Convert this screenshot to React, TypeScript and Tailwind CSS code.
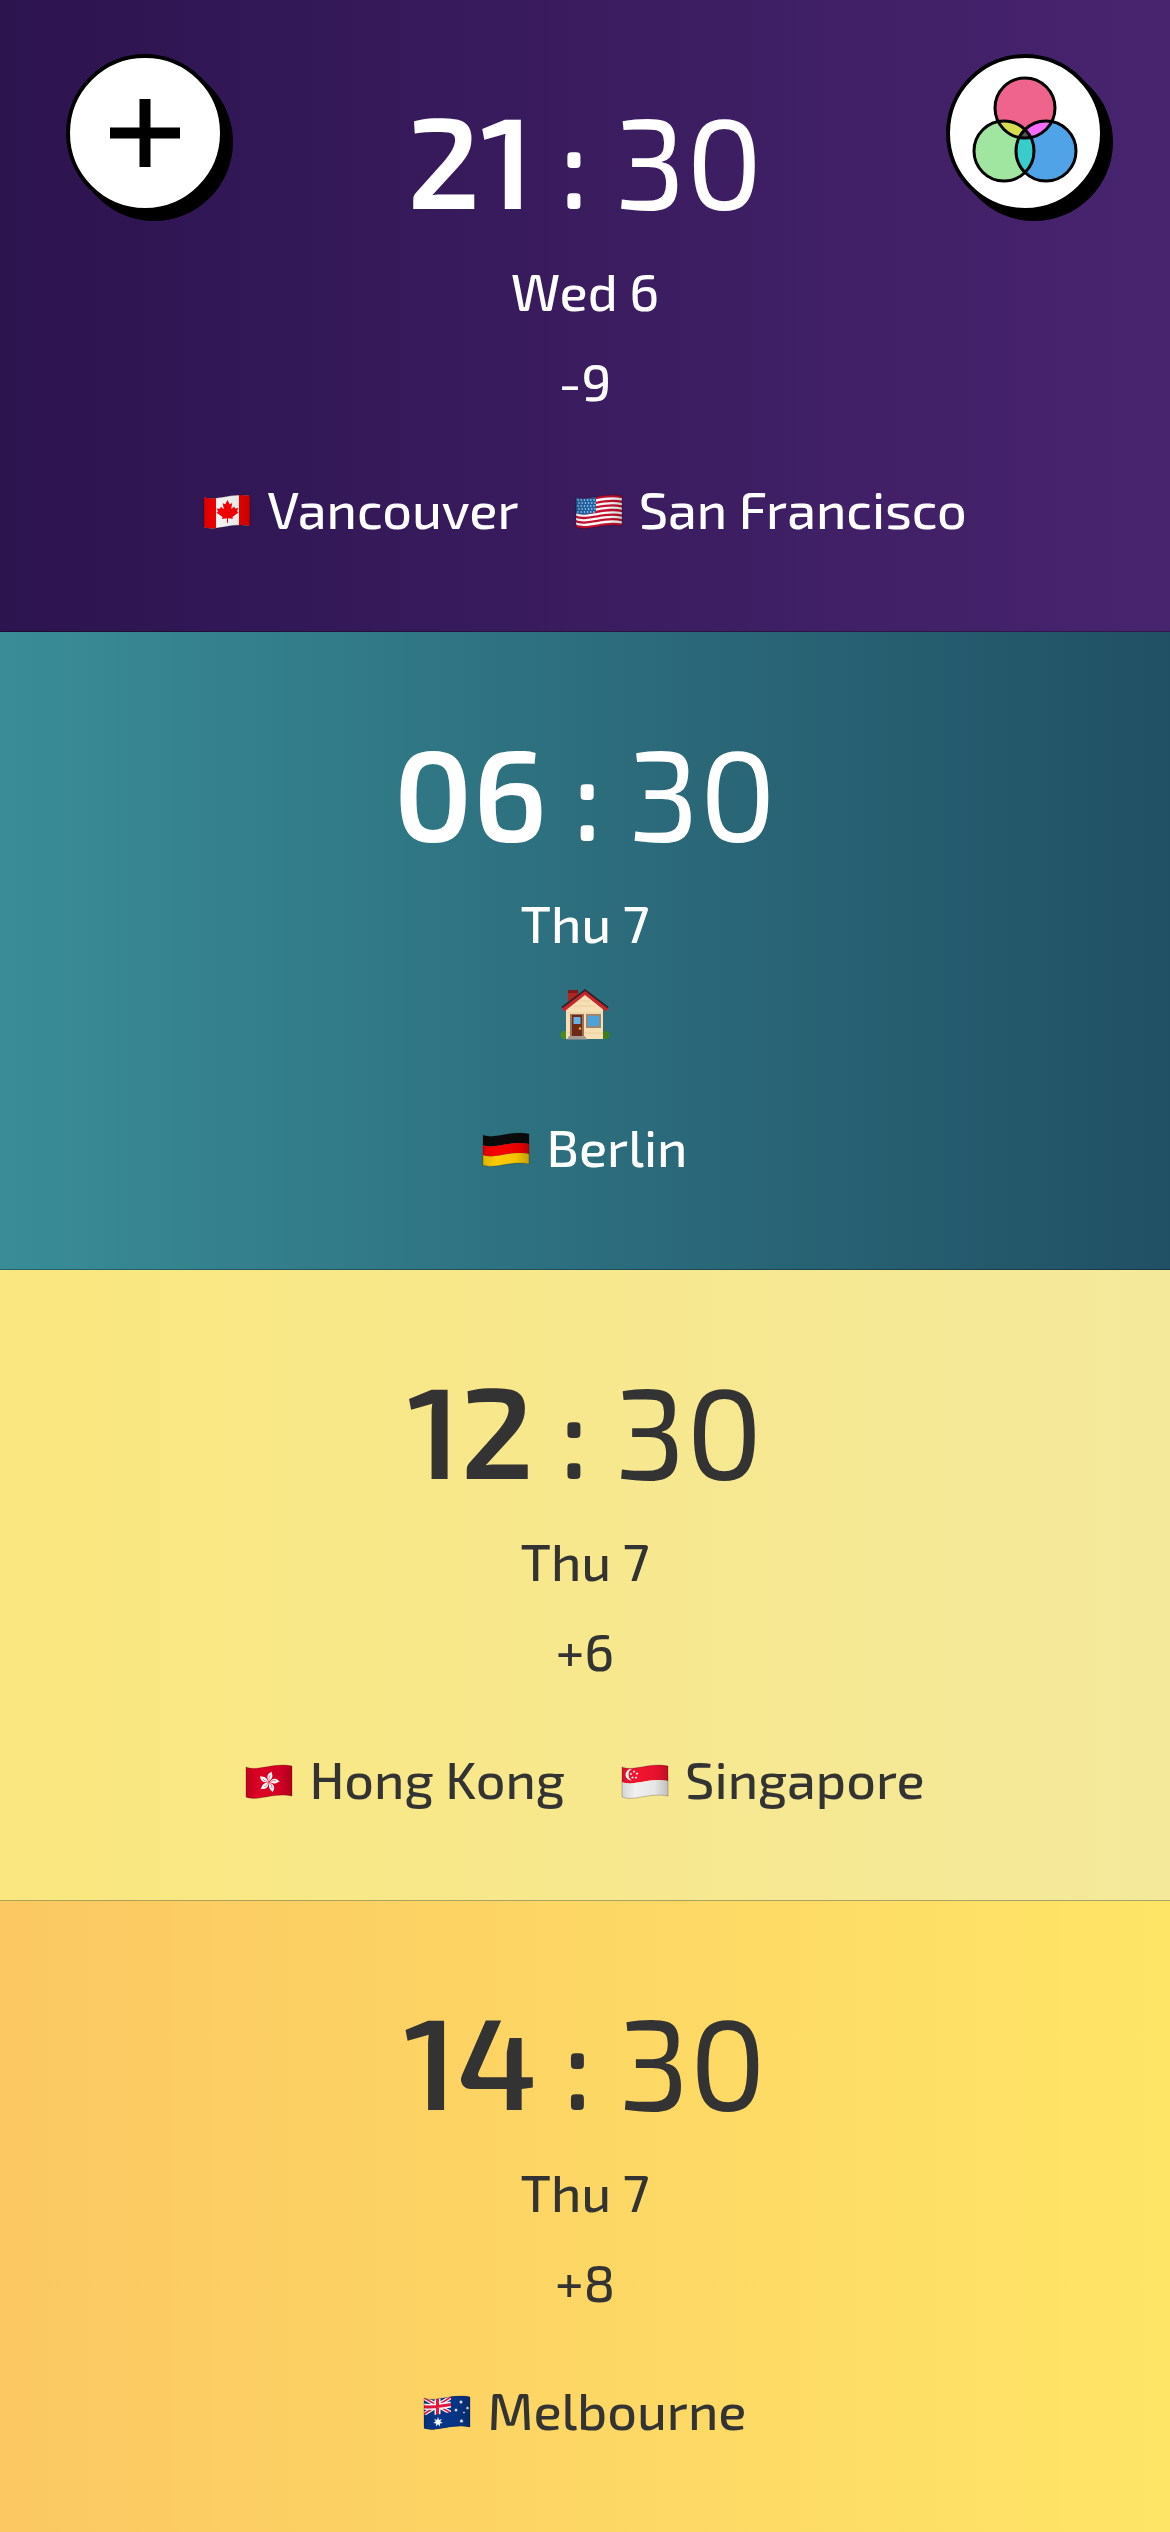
import React from "react";

type Flag = "ca" | "us" | "de" | "hk" | "sg" | "au";

const WAVE = "M1 4 C12 9 29 -1 47 3 V33 C29 29 12 39 1 34 Z";

function Star({ x, y, r, n = 5, fill = "#fff" }: { x: number; y: number; r: number; n?: number; fill?: string }) {
  const pts = Array.from({ length: n * 2 }, (_, i) => {
    const a = (Math.PI * i) / n - Math.PI / 2;
    const d = i % 2 ? r * 0.45 : r;
    return `${x + d * Math.cos(a)},${y + d * Math.sin(a)}`;
  });
  return <polygon points={pts.join(" ")} fill={fill} />;
}

function band(y1: number, y2: number) {
  return `M1 ${y1 + 1} C12 ${y1 + 6} 29 ${y1 - 4} 47 ${y1} V${y2} C29 ${y2 - 4} 12 ${y2 + 6} 1 ${y2 + 1} Z`;
}

function FlagArt({ code }: { code: Flag }) {
  switch (code) {
    case "ca":
      return (
        <>
          <rect width="48" height="38" fill="#f4f4f4" />
          <rect width="13" height="38" fill="#f50000" />
          <rect x="36" width="12" height="38" fill="#f50000" />
          <path
            d="M24.500 7 l2.200 4.200 2.500-1.200 -1 6 3-2.500 .8 2 3.200-.5 -1.200 3.200 1.400 1.200 -6 4.600 .6 1.800 -5-.5 v4.500 h-1 v-4.500 l-5 .8 .6-2 -6-4.300 1.400-1.200 -1.200-3.200 3.200 .3 .8-2 3 2.500 -1-6 2.500 1 Z"
            fill="#f50000"
          />
        </>
      );
    case "us":
      return (
        <>
          <rect width="48" height="38" fill="#c8102e" />
          {[1, 3, 5, 7, 9, 11].map((i) => (
            <path key={i} d={band(3 + i * 2.3, 3 + (i + 1) * 2.3)} fill="#fff" />
          ))}
          <path d="M0 3 C8 7 15 5 21 3 V19 C15 21 8 23 0 20 Z" fill="#1d62a5" />
          {Array.from({ length: 30 }, (_, i) => (
            <circle key={i} cx={3 + (i % 6) * 3.2 + (Math.floor(i / 6) % 2)} cy={7 + Math.floor(i / 6) * 3} r="0.8" fill="#d4e6f5" />
          ))}
        </>
      );
    case "de":
      return (
        <>
          <path d={band(0, 13)} fill="#0b0b0b" />
          <path d={band(13, 23)} fill="#f80000" />
          <path d={band(23, 36)} fill="#fccb00" />
        </>
      );
    case "hk":
      return (
        <>
          <rect width="48" height="38" fill="#dc0024" />
          {[0, 72, 144, 216, 288].map((a) => (
            <g key={a} transform={`rotate(${a + 6} 24 19)`}>
              <path d="M24 18.500 C21.500 16 20 11 26 8.500 C25.500 10.500 27.500 12 26.500 14.500 C26 16 24.800 17 24 18.500 Z" fill="#fff" />
              <path d="M24 17.500 C23.300 15.500 23.500 13.500 24.500 12" fill="none" stroke="#dc0024" strokeWidth="0.5" />
            </g>
          ))}
        </>
      );
    case "sg":
      return (
        <>
          <path d={band(0, 18)} fill="#f2132f" />
          <path d={band(18, 36)} fill="#f0f0f0" />
          <path d="M11 6 A5.800 5.800 0 1 0 11 17.500 A6.500 6.500 0 0 1 11 6 Z" fill="#fff" />
          <Star x={13} y={8.5} r={1.5} />
          <Star x={10} y={11} r={1.5} />
          <Star x={16} y={10.5} r={1.5} />
          <Star x={11.5} y={14.5} r={1.5} />
          <Star x={15} y={14.5} r={1.5} />
        </>
      );
    case "au":
      return (
        <>
          <rect width="48" height="38" fill="#07368a" />
          <path d="M1 4 L28 19 M28 3 L1 20" stroke="#fff" strokeWidth="4" />
          <path d="M1 4 L28 19 M28 3 L1 20" stroke="#e8173b" strokeWidth="1.500" />
          <path d="M14.500 3 V21 M0 12.500 C9 14 20 12 28 10.500" fill="none" stroke="#fff" strokeWidth="6" />
          <path d="M14.500 3 V21 M0 12.500 C9 14 20 12 28 10.500" fill="none" stroke="#e8173b" strokeWidth="3" />
          <path d="M28 0 H48 V38 H0 V20.500 C10 22 19 20 28 18 Z" fill="#07368a" />
          <Star x={15} y={28} r={5} n={7} />
          <Star x={38} y={8} r={2.2} n={7} />
          <Star x={33} y={16} r={2} n={7} />
          <Star x={44.5} y={14} r={2} n={7} />
          <Star x={41} y={18.5} r={1.3} />
          <Star x={38.5} y={27} r={2.3} n={7} />
        </>
      );
  }
}

function FlagIcon({ code }: { code: Flag }) {
  return (
    <svg viewBox="0 0 48 38" className="mt-2 h-[38px] w-[48px] shrink-0" aria-hidden="true">
      <defs>
        <clipPath id={`wave-${code}`}>
          <path d={WAVE} />
        </clipPath>
        <linearGradient id={`shade-${code}`}>
          <stop offset="0" stopColor="#000" stopOpacity="0.12" />
          <stop offset="0.3" stopColor="#000" stopOpacity="0" />
          <stop offset="0.7" stopColor="#000" stopOpacity="0.04" />
          <stop offset="1" stopColor="#000" stopOpacity="0.22" />
        </linearGradient>
      </defs>
      <g clipPath={`url(#wave-${code})`}>
        <FlagArt code={code} />
        <rect width="48" height="38" fill={`url(#shade-${code})`} />
      </g>
      <path d={WAVE} fill="none" stroke="#000" strokeOpacity="0.22" />
    </svg>
  );
}

function House() {
  return (
    <svg viewBox="0 0 50 52" className="h-[52px] w-[50px]" role="img" aria-label="Home">
      <path d="M8 1 h10 v12 l-10 8 Z" fill="#b3261e" />
      <path d="M8 1 h10 v3 h-10 Z" fill="#7e1a17" />
      <circle cx="4.500" cy="46" r="4" fill="#4b8b1d" />
      <circle cx="45.500" cy="46" r="4" fill="#3f7f18" />
      <path d="M6 20 L25 5 L43 20 V50 H6 Z" fill="#f6dfb4" />
      <path d="M7 24 H43 M7 44 H43 M14 17 H36 M20 12 H30" stroke="#e6cb98" strokeWidth="0.8" />
      <path d="M3 21 L25 3.500 L47 21" fill="none" stroke="#c9252b" strokeWidth="4" />
      <path d="M2 18.500 L25 1 L48 18.500" fill="none" stroke="#33232b" strokeWidth="1.800" />
      <rect x="10" y="25" width="14" height="23" fill="#98735a" />
      <rect x="12" y="26" width="10" height="21" fill="#6f2918" />
      <rect x="13.500" y="28" width="7" height="7" fill="#62b2e5" />
      <circle cx="20" cy="39.500" r="1.200" fill="#f0b429" />
      <path d="M9 47 h16 l2 3.500 H7 Z" fill="#a39b96" />
      <rect x="26" y="25" width="15" height="14" fill="#9b8672" />
      <rect x="28" y="27" width="11" height="10" fill="#4ba3dc" />
    </svg>
  );
}

function VennIcon() {
  return (
    <svg viewBox="-2 0 110 114" className="h-[114px] w-[110px]" aria-hidden="true">
      <defs>
        <clipPath id="venn-top">
          <circle cx="53" cy="32" r="30" />
        </clipPath>
        <clipPath id="venn-left">
          <circle cx="32" cy="75" r="30" />
        </clipPath>
      </defs>
      <circle cx="53" cy="32" r="30" fill="#ee648c" />
      <circle cx="32" cy="75" r="30" fill="#a1e6a0" />
      <circle cx="74" cy="75" r="30" fill="#50a3e6" />
      <g clipPath="url(#venn-top)">
        <circle cx="32" cy="75" r="30" fill="#d8dc50" />
        <circle cx="74" cy="75" r="30" fill="#f76bfa" />
      </g>
      <g clipPath="url(#venn-left)">
        <circle cx="74" cy="75" r="30" fill="#36cdcb" />
        <g clipPath="url(#venn-top)">
          <circle cx="74" cy="75" r="30" fill="#555555" />
        </g>
      </g>
      <g fill="none" stroke="#000" strokeWidth="3">
        <circle cx="53" cy="32" r="30" />
        <circle cx="32" cy="75" r="30" />
        <circle cx="74" cy="75" r="30" />
      </g>
    </svg>
  );
}

function RoundButton({ label, children }: { label: string; children: React.ReactNode }) {
  return (
    <button
      type="button"
      aria-label={label}
      className="flex size-[158px] items-center justify-center rounded-full border-4 border-black bg-white shadow-[9px_9px_0_0_#000]"
    >
      {children}
    </button>
  );
}

type Zone = {
  hour: string;
  minute: string;
  day: string;
  offset: string | null;
  cities: { flag: Flag; name: string }[];
  look: string;
};

const zones: Zone[] = [
  {
    hour: "21",
    minute: "30",
    day: "Wed 6",
    offset: "-9",
    cities: [
      { flag: "ca", name: "Vancouver" },
      { flag: "us", name: "San Francisco" },
    ],
    look: "text-white bg-linear-to-r from-[#2c144f] to-[#48246f]",
  },
  {
    hour: "06",
    minute: "30",
    day: "Thu 7",
    offset: null,
    cities: [{ flag: "de", name: "Berlin" }],
    look: "text-white bg-linear-to-r from-[#398d97] to-[#205064]",
  },
  {
    hour: "12",
    minute: "30",
    day: "Thu 7",
    offset: "+6",
    cities: [
      { flag: "hk", name: "Hong Kong" },
      { flag: "sg", name: "Singapore" },
    ],
    look: "text-[#333333] bg-linear-to-r from-[#fae77e] to-[#f4e99b]",
  },
  {
    hour: "14",
    minute: "30",
    day: "Thu 7",
    offset: "+8",
    cities: [{ flag: "au", name: "Melbourne" }],
    look: "text-[#333333] bg-linear-to-r from-[#fbc862] to-[#fee566]",
  },
];

function ZonePanel({ zone }: { zone: Zone }) {
  return (
    <section className={`flex grow flex-col items-center border-b border-black/30 pt-[78px] last-of-type:border-b-0 ${zone.look}`}>
      <h2 className="flex h-[160px] items-center gap-[25px] text-[128px] leading-none font-medium">
        <span className="font-semibold">{zone.hour}</span>
        <span>:</span>
        <span className="font-normal">{zone.minute}</span>
      </h2>
      <p className="mt-[7px] text-[52px] leading-[90px] font-medium">{zone.day}</p>
      {zone.offset ? (
        <p className="text-[52px] leading-[90px] font-medium">{zone.offset}</p>
      ) : (
        <div className="flex h-[96px] items-center">
          <House />
        </div>
      )}
      <ul className="mt-[38px] flex flex-wrap justify-center gap-x-[56px] px-8">
        {zone.cities.map((city) => (
          <li key={city.name} className="flex items-center gap-[16px] text-[52px] leading-[90px] font-medium">
            <FlagIcon code={city.flag} />
            {city.name}
          </li>
        ))}
      </ul>
    </section>
  );
}

export default function App() {
  return (
    <main className="relative flex min-h-screen flex-col font-['Exo_2',Roboto,sans-serif]">
      {zones.map((zone) => (
        <ZonePanel key={zone.hour} zone={zone} />
      ))}
      <div className="absolute inset-x-[66px] top-[54px] flex justify-between">
        <RoundButton label="Add city">
          <svg viewBox="0 0 70 68" className="h-[68px] w-[70px]" aria-hidden="true">
            <path d="M35 0 V68 M0 34 H70" stroke="#000" strokeWidth="11" />
          </svg>
        </RoundButton>
        <RoundButton label="Change colours">
          <VennIcon />
        </RoundButton>
      </div>
    </main>
  );
}
